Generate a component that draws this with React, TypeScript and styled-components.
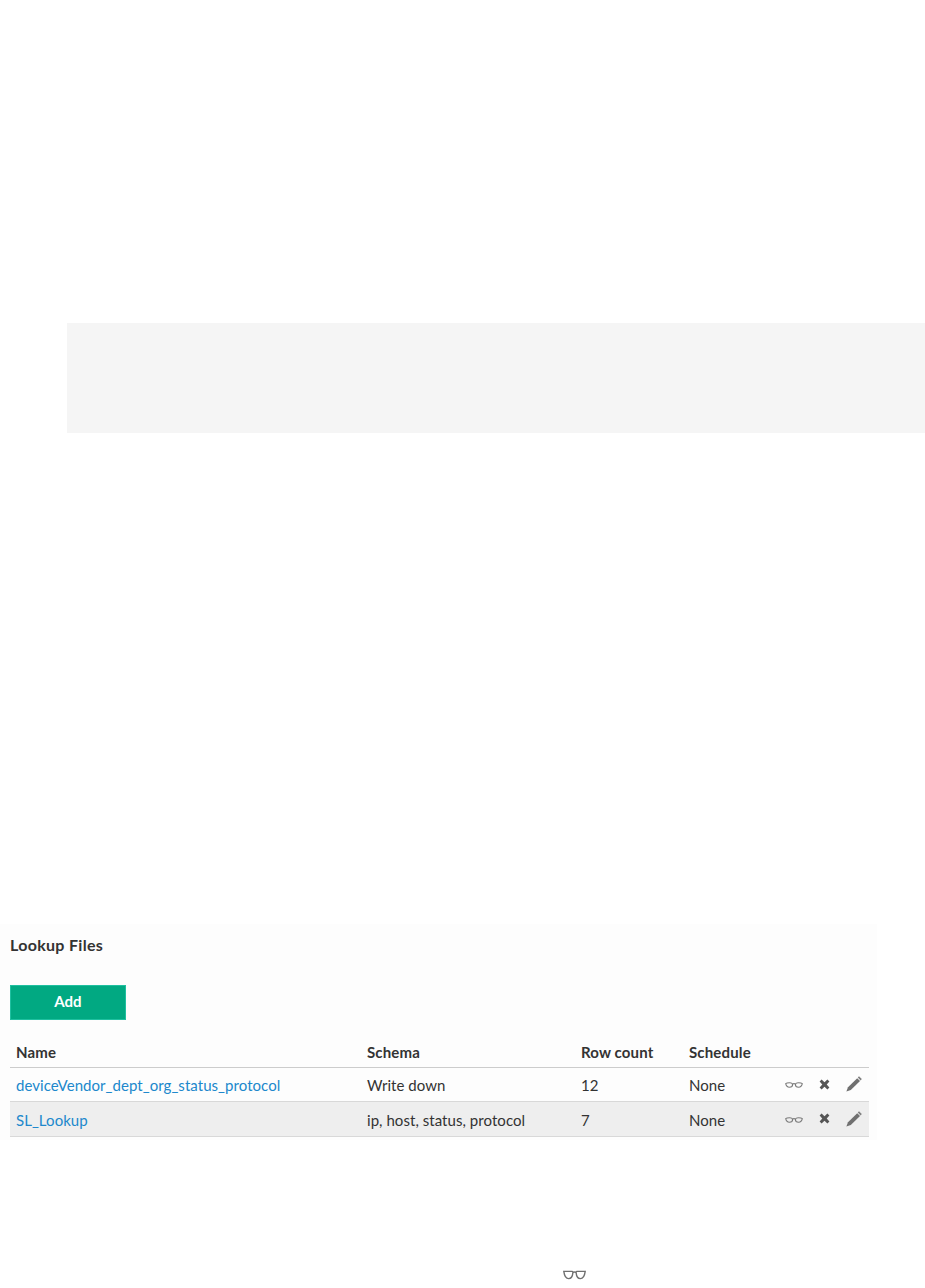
import React from "react";
import styled, { createGlobalStyle } from "styled-components";

const Global = createGlobalStyle`
  html, body { margin: 0; padding: 0; background: #ffffff; }
  body { font-family: "Lato", "Open Sans", "Liberation Sans", sans-serif; color: #333333; }
`;

const Page = styled.div`
  position: relative;
  width: 925px;
  height: 1288px;
  overflow: hidden;
  padding-top: 323px;
  box-sizing: border-box;
`;

const CodeBlock = styled.div`
  margin-left: 67px;
  height: 110px;
  background: #f5f5f5;
`;

const Panel = styled.section`
  margin-top: 491px;
  width: 877px;
  height: 216px;
  box-sizing: border-box;
  padding: 11px 8px 0 10px;
  background: #fdfdfd;
`;

const Title = styled.h3`
  margin: 0;
  font-size: 16px;
  line-height: 19px;
  letter-spacing: 0.3px;
  font-weight: 700;
  color: #333333;
`;

const AddButton = styled.button`
  display: block;
  margin-top: 31px;
  width: 116px;
  height: 35px;
  padding: 0 0 3px;
  border: 1px solid #1fc0a0;
  background: #01a982;
  color: #ffffff;
  font-family: inherit;
  font-size: 15px;
  font-weight: 700;
`;

const Table = styled.table`
  margin-top: 15px;
  width: 859px;
  border-collapse: collapse;
  table-layout: fixed;
  font-size: 15px;
  letter-spacing: 0.05px;
`;

const Th = styled.th<{ $w?: number }>`
  width: ${(p) => (p.$w ? `${p.$w}px` : "auto")};
  height: 32px;
  padding: 2px 6px 0;
  box-sizing: border-box;
  text-align: left;
  font-weight: 700;
  letter-spacing: 0.15px;
  border-bottom: 1px solid #cccccc;
`;

const Row = styled.tr<{ $shaded?: boolean }>`
  background: ${(p) => (p.$shaded ? "#eeeeee" : "transparent")};
`;

const Td = styled.td<{ $tall?: boolean }>`
  height: ${(p) => (p.$tall ? 35 : 34)}px;
  padding: 2px 6px 0;
  box-sizing: border-box;
  border-bottom: 1px solid #d8d8d8;
  color: #333333;
`;

const Link = styled.a`
  color: #2088cc;
  text-decoration: none;
`;

const Actions = styled.div`
  display: flex;
  align-items: center;
  gap: 16px;
  padding-left: 4px;
  margin-top: -2px;
`;

const IconSlot = styled.span<{ $w: number }>`
  display: inline-flex;
  width: ${(p) => p.$w}px;
  justify-content: center;
  align-items: center;
`;

const FloatingGlasses = styled.span`
  position: absolute;
  left: 563px;
  top: 1270px;
  display: flex;
`;

const RowGlasses = () => (
  <svg width="18" height="8" viewBox="0 0 18 8" fill="none" stroke="#7a7a7a" strokeWidth="1.1">
    <path d="M0.7 3.6 C1.6 2.9 3 2.8 4.4 2.8 C6.4 2.8 7.6 3.6 7.6 4.8 C7.6 6.2 6.2 7.2 4.4 7.2 C2.6 7.2 1.2 6 0.7 3.6 Z" />
    <path d="M17.3 3.6 C16.4 2.9 15 2.8 13.6 2.8 C11.6 2.8 10.4 3.6 10.4 4.8 C10.4 6.2 11.8 7.2 13.6 7.2 C15.4 7.2 16.8 6 17.3 3.6 Z" />
    <path d="M7.6 4 C8.4 3.6 9.6 3.6 10.4 4" />
  </svg>
);

const BigGlasses = () => (
  <svg width="23" height="10" viewBox="0 0 23 10" fill="none" stroke="#707070" strokeWidth="1.4">
    <path d="M0.8 1.4 H9.2 C9.8 1.4 10 1.9 9.9 2.6 C9.6 6 8 8.6 5.6 8.6 C3 8.6 1.4 6 0.8 1.4 Z" />
    <path d="M22.2 1.4 H13.8 C13.2 1.4 13 1.9 13.1 2.6 C13.4 6 15 8.6 17.4 8.6 C20 8.6 21.6 6 22.2 1.4 Z" />
    <path d="M9.9 2.4 C11 1.9 12 1.9 13.1 2.4" />
  </svg>
);

const Cross = () => (
  <svg width="11" height="11" viewBox="0 0 11 11" fill="#555555">
    <path d="M2.6 0.6 L5.5 3.3 L8.4 0.6 L10.4 2.6 L7.7 5.5 L10.4 8.4 L8.4 10.4 L5.5 7.7 L2.6 10.4 L0.6 8.4 L3.3 5.5 L0.6 2.6 Z" />
  </svg>
);

const Pencil = () => (
  <svg width="16" height="16" viewBox="0 0 16 16" fill="#707070">
    <path d="M13 0.2 L15.8 3 L14.6 4.4 L11.8 1.6 Z" fill="#808080" />
    <path d="M11.2 2.2 L14 5 L4.8 14 L0.4 15.6 L2 11.2 Z" />
  </svg>
);

const rows = [
  { name: "deviceVendor_dept_org_status_protocol", schema: "Write down", count: "12", shaded: false },
  { name: "SL_Lookup", schema: "ip, host, status, protocol", count: "7", shaded: true },
];

export default function App() {
  return (
    <Page>
      <Global />
      <CodeBlock />
      <Panel>
        <Title>Lookup Files</Title>
        <AddButton>Add</AddButton>
        <Table>
          <thead>
            <tr>
              <Th $w={351}>Name</Th>
              <Th $w={214}>Schema</Th>
              <Th $w={108}>Row count</Th>
              <Th $w={92}>Schedule</Th>
              <Th />
            </tr>
          </thead>
          <tbody>
            {rows.map((r) => (
              <Row key={r.name} $shaded={r.shaded}>
                <Td $tall={r.shaded}><Link href="#">{r.name}</Link></Td>
                <Td $tall={r.shaded}>{r.schema}</Td>
                <Td $tall={r.shaded}>{r.count}</Td>
                <Td $tall={r.shaded}>None</Td>
                <Td $tall={r.shaded}>
                  <Actions>
                    <IconSlot $w={18}><RowGlasses /></IconSlot>
                    <IconSlot $w={11}><Cross /></IconSlot>
                    <IconSlot $w={16}><Pencil /></IconSlot>
                  </Actions>
                </Td>
              </Row>
            ))}
          </tbody>
        </Table>
      </Panel>
      <FloatingGlasses><BigGlasses /></FloatingGlasses>
    </Page>
  );
}
